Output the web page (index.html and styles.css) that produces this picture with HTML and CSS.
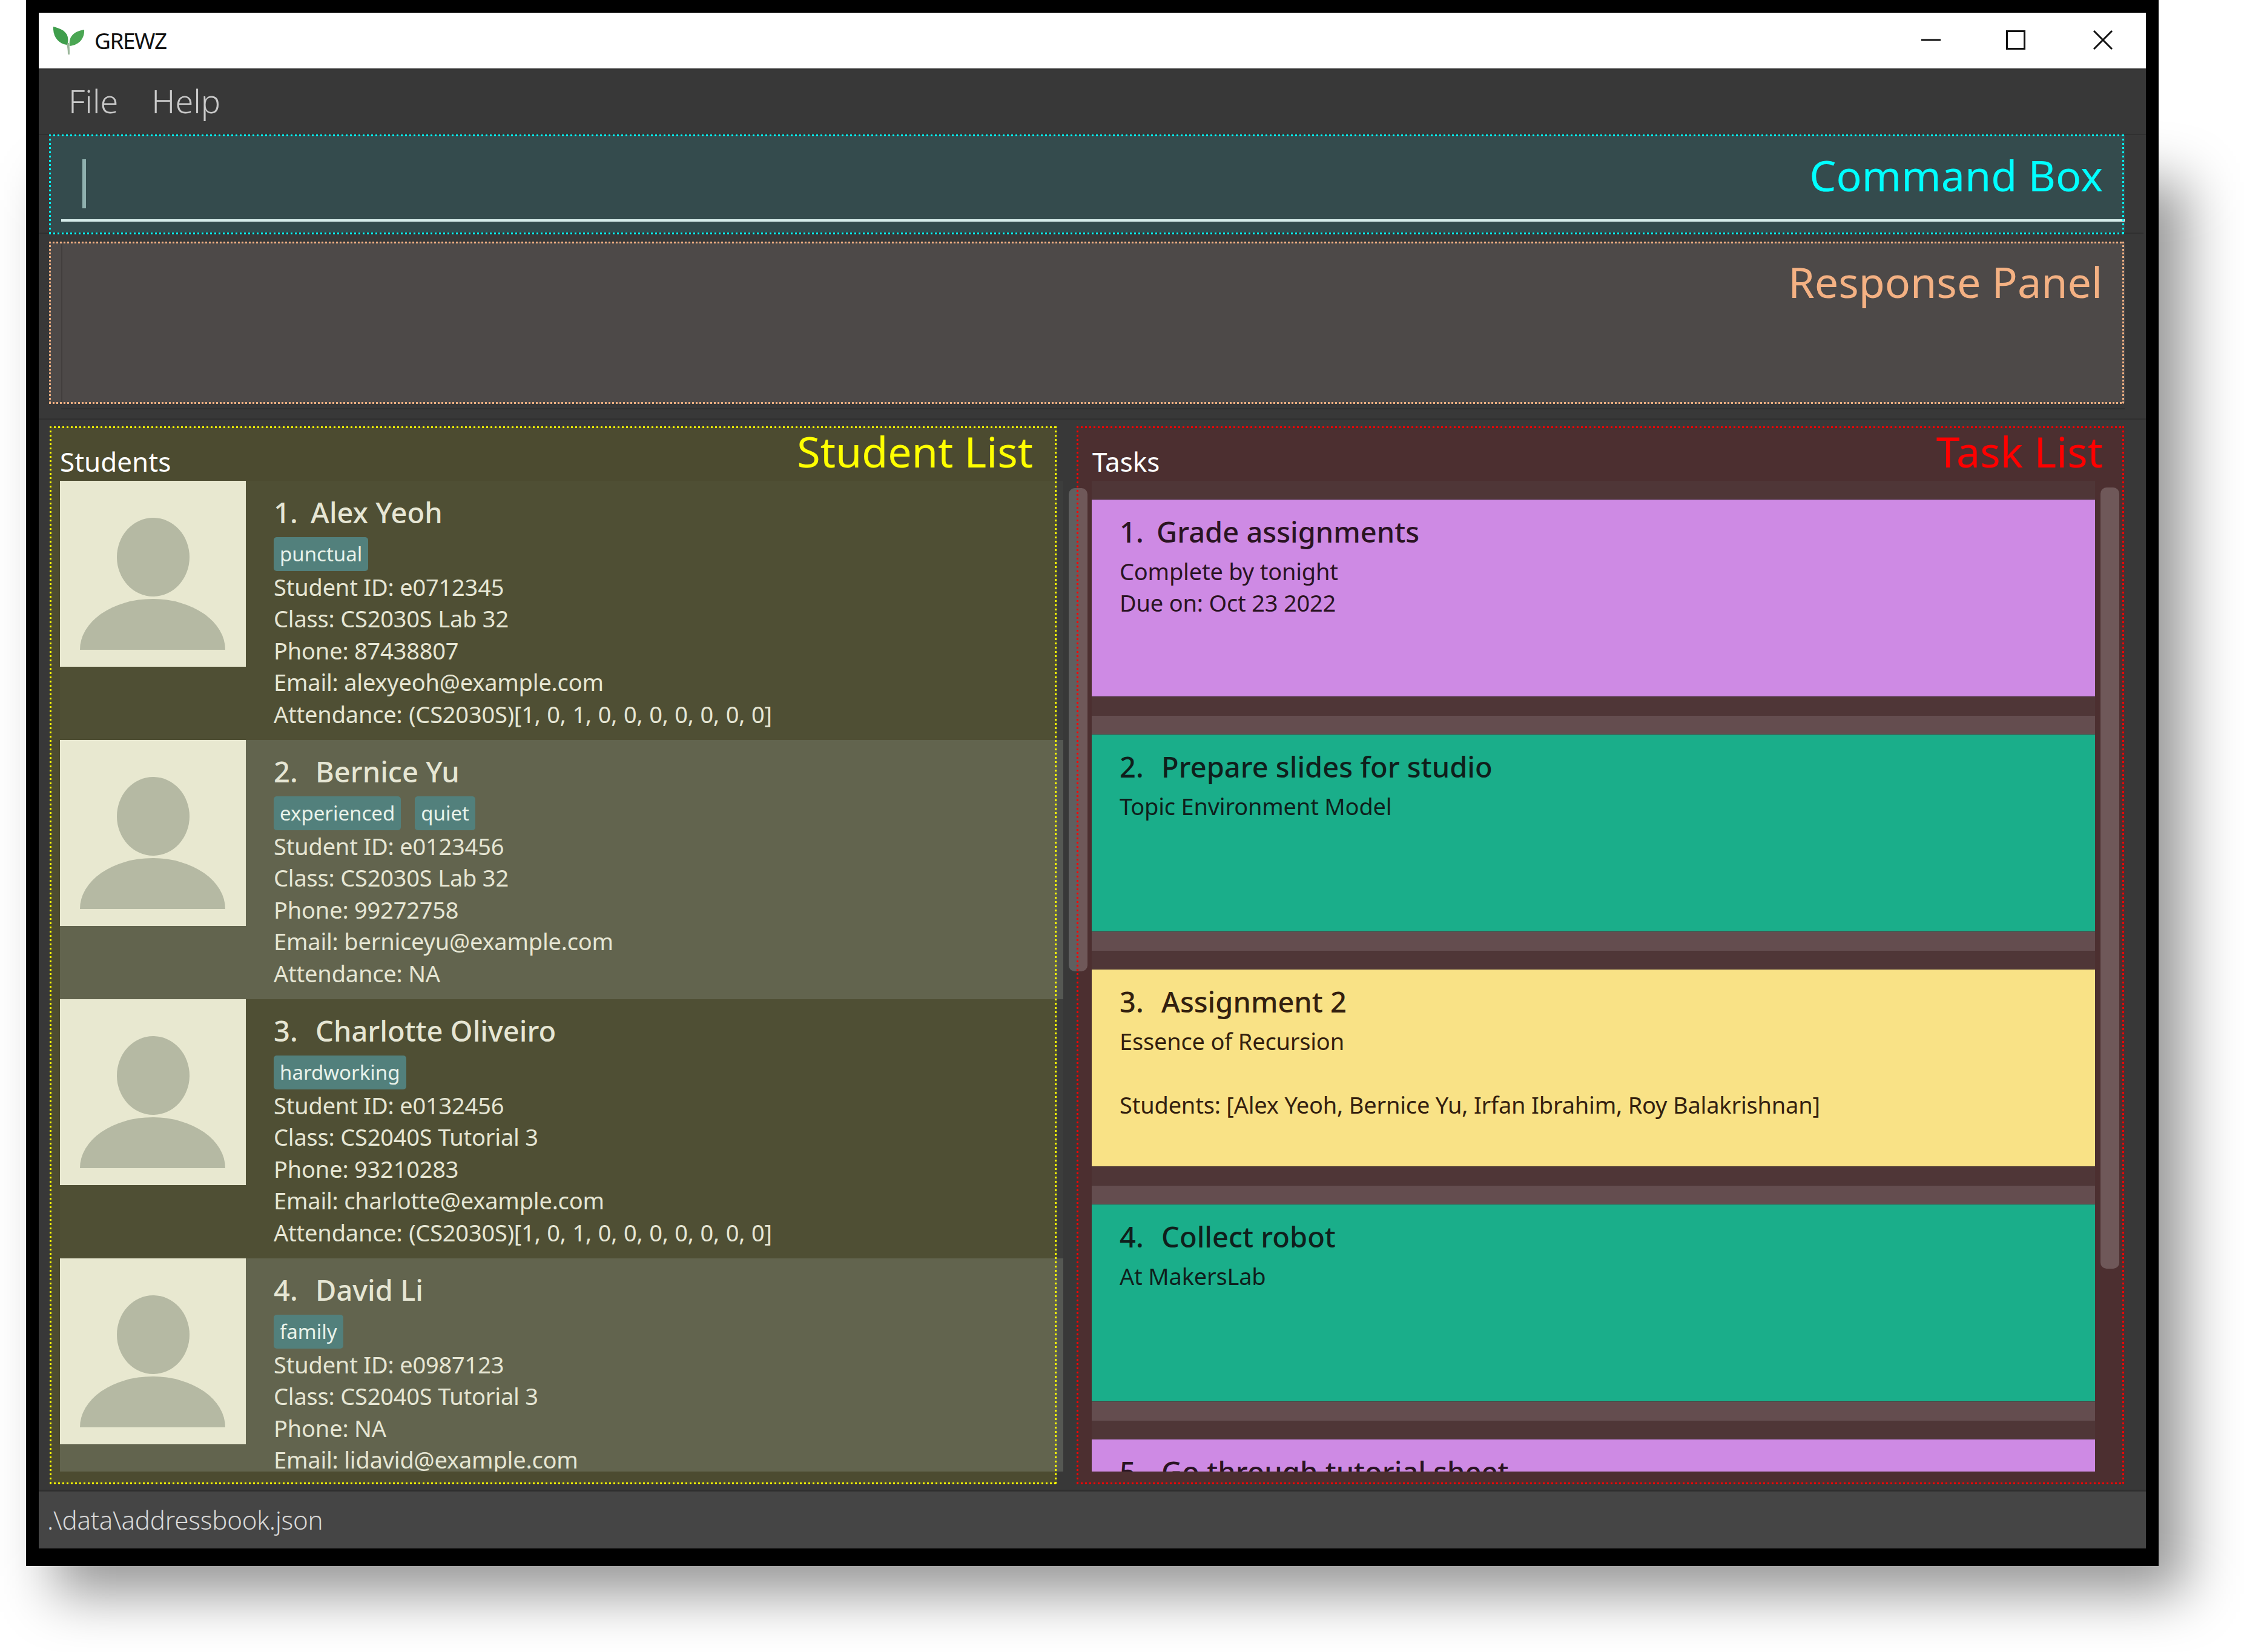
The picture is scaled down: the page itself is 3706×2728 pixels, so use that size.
FILE: index.html
```html
<!DOCTYPE html>
<html lang="en">
<head>
<meta charset="utf-8">
<title>GREWZ</title>
<link rel="stylesheet" href="styles.css">
</head>
<body>
<div class="stage">
  <div class="shadow"></div>
  <div class="frame">
    <div class="app">
      <header class="titlebar">
        <div class="brand">
          <svg class="logo" viewBox="0 0 52 46" aria-hidden="true">
            <path d="M21 26C23 32 24 38 24 46H27C27 38 27 32 26 27Z" fill="#9bb79b"/>
            <path d="M22 30C8 28 -1 16 0 0C8 2 22 6 24 18C25 24 24 28 22 30Z" fill="#3f9e4c"/>
            <path d="M27 32C25 18 32 8 51 5C52 18 44 30 27 32Z" fill="#4aa653"/>
          </svg>
          <span class="brand-name">GREWZ</span>
        </div>
        <div class="controls">
          <svg class="ctl" viewBox="0 0 32 32" aria-hidden="true"><path d="M0 16H32" /></svg>
          <svg class="ctl" viewBox="0 0 32 32" aria-hidden="true"><rect x="1.5" y="1.5" width="29" height="29"/></svg>
          <svg class="ctl ctl-close" viewBox="0 0 32 32" aria-hidden="true"><path d="M1 1L31 31M31 1L1 31"/></svg>
        </div>
      </header>
      <nav class="menubar"><span class="menu-item">File</span><span class="menu-item">Help</span></nav>
      <section class="cmd">
        <span class="caret"></span>
        <div class="underline"></div>
        <span class="note note-cyan">Command Box</span>
      </section>
      <section class="resp">
        <span class="note note-peach">Response Panel</span>
      </section>
      <div class="divider"></div>
      <main class="lists">
        <section class="panel panel-students">
          <h2 class="panel-title">Students</h2>
          <span class="note note-yellow">Student List</span>
          <div class="viewport">
            <article class="student">
              <svg class="avatar" viewBox="0 0 307 307" aria-hidden="true"><ellipse cx="154" cy="126" rx="60" ry="65"/><path d="M33 279A120 84 0 0 1 273 279Z"/></svg>
              <div class="info">
                <div class="name"><span class="num one">1.</span>&nbsp;&nbsp;Alex Yeoh</div>
                <div class="tags"><span class="tag">punctual</span></div>
                <div class="line">Student ID: e0712345</div>
                <div class="line">Class: CS2030S Lab 32</div>
                <div class="line">Phone: 87438807</div>
                <div class="line">Email: alexyeoh@example.com</div>
                <div class="line line-attendance">Attendance: (CS2030S)[1, 0, 1, 0, 0, 0, 0, 0, 0, 0]</div>
              </div>
            </article>
            <article class="student alt">
              <svg class="avatar" viewBox="0 0 307 307" aria-hidden="true"><ellipse cx="154" cy="126" rx="60" ry="65"/><path d="M33 279A120 84 0 0 1 273 279Z"/></svg>
              <div class="info">
                <div class="name"><span class="num">2.</span>&nbsp;&nbsp;Bernice Yu</div>
                <div class="tags"><span class="tag">experienced</span><span class="tag">quiet</span></div>
                <div class="line">Student ID: e0123456</div>
                <div class="line">Class: CS2030S Lab 32</div>
                <div class="line">Phone: 99272758</div>
                <div class="line">Email: berniceyu@example.com</div>
                <div class="line">Attendance: NA</div>
              </div>
            </article>
            <article class="student">
              <svg class="avatar" viewBox="0 0 307 307" aria-hidden="true"><ellipse cx="154" cy="126" rx="60" ry="65"/><path d="M33 279A120 84 0 0 1 273 279Z"/></svg>
              <div class="info">
                <div class="name"><span class="num">3.</span>&nbsp;&nbsp;Charlotte Oliveiro</div>
                <div class="tags"><span class="tag">hardworking</span></div>
                <div class="line">Student ID: e0132456</div>
                <div class="line">Class: CS2040S Tutorial 3</div>
                <div class="line">Phone: 93210283</div>
                <div class="line">Email: charlotte@example.com</div>
                <div class="line line-attendance">Attendance: (CS2030S)[1, 0, 1, 0, 0, 0, 0, 0, 0, 0]</div>
              </div>
            </article>
            <article class="student alt">
              <svg class="avatar" viewBox="0 0 307 307" aria-hidden="true"><ellipse cx="154" cy="126" rx="60" ry="65"/><path d="M33 279A120 84 0 0 1 273 279Z"/></svg>
              <div class="info">
                <div class="name"><span class="num">4.</span>&nbsp;&nbsp;David Li</div>
                <div class="tags"><span class="tag">family</span></div>
                <div class="line">Student ID: e0987123</div>
                <div class="line">Class: CS2040S Tutorial 3</div>
                <div class="line">Phone: NA</div>
                <div class="line">Email: lidavid@example.com</div>
              </div>
            </article>
          </div>
        </section>
        <div class="scrollbar scrollbar-students"></div>
        <section class="panel panel-tasks">
          <h2 class="panel-title">Tasks</h2>
          <span class="note note-red">Task List</span>
          <div class="viewport">
            <div class="task-row"><article class="card purple">
              <div class="name"><span class="num one">1.</span>&nbsp;&nbsp;Grade assignments</div>
              <div class="line">Complete by tonight</div>
              <div class="line">Due on: Oct 23 2022</div>
            </article></div>
            <div class="task-row alt"><article class="card teal">
              <div class="name"><span class="num">2.</span>&nbsp;&nbsp;Prepare slides for studio</div>
              <div class="line">Topic Environment Model</div>
            </article></div>
            <div class="task-row"><article class="card sand">
              <div class="name"><span class="num">3.</span>&nbsp;&nbsp;Assignment 2</div>
              <div class="line">Essence of Recursion</div>
              <div class="line">&nbsp;</div>
              <div class="line">Students: [Alex Yeoh, Bernice Yu, Irfan Ibrahim, Roy Balakrishnan]</div>
            </article></div>
            <div class="task-row alt"><article class="card teal">
              <div class="name"><span class="num">4.</span>&nbsp;&nbsp;Collect robot</div>
              <div class="line">At MakersLab</div>
            </article></div>
            <div class="task-row"><article class="card purple">
              <div class="name"><span class="num">5.</span>&nbsp;&nbsp;Go through tutorial sheet</div>
            </article></div>
          </div>
          <div class="scrollbar scrollbar-tasks"></div>
        </section>
      </main>
      <footer class="status">.\data\addressbook.json</footer>
    </div>
  </div>
</div>
</body>
</html>
```
FILE: styles.css
```css
* { box-sizing: border-box; }
html, body { margin: 0; background: #fff; }
body { font-family: "Noto Sans", "Open Sans", sans-serif; }

.stage { position: relative; width: 3706px; height: 2728px; overflow: hidden; }
.shadow {
  position: absolute; left: 90px; top: 300px; width: 3520px; height: 2332px;
  background: rgba(0, 0, 0, .41); filter: blur(45px);
}
.frame {
  position: relative; margin-left: 43px; width: 3522px; height: 2586px;
  padding: 21px 21px 29px; background: #000;
}
.app { display: flex; flex-direction: column; height: 2536px; background: #383838; }

.titlebar {
  flex: none; height: 93px; background: #fff; border-bottom: 2px solid #777;
  display: flex; align-items: center; justify-content: space-between;
  padding-left: 24px; padding-right: 55px;
}
.brand { display: flex; align-items: center; gap: 16px; }
.logo { width: 52px; height: 46px; }
.brand-name { font-size: 37px; color: #111; letter-spacing: -1.5px; }
.controls { display: flex; gap: 108px; margin-top: -1px; }
.ctl { width: 32px; height: 32px; fill: none; stroke: #111; stroke-width: 3; }
.ctl-close { margin-left: 4px; }

.menubar {
  flex: none; height: 109px; padding-left: 49px; padding-bottom: 4px; display: flex; gap: 55px;
  align-items: center; font-size: 54px; font-weight: 300; color: #c9c9c9;
  border-bottom: 2px solid #303030;
}

/* square dotted outline drawn over the region, including anything that overflows it */
.cmd, .resp, .panel { --dot: #fff; --p: 7px; --t: 3px; }
.cmd::after, .resp::after, .panel::after {
  content: ""; position: absolute; inset: -4px -2px -4px -4px; z-index: 3; pointer-events: none;
  background:
    linear-gradient(to right, var(--dot) 50%, transparent 0) 0 0 / var(--p) var(--t) repeat-x,
    linear-gradient(to right, var(--dot) 50%, transparent 0) 0 100% / var(--p) var(--t) repeat-x,
    linear-gradient(to bottom, var(--dot) 50%, transparent 0) 0 0 / var(--t) var(--p) repeat-y,
    linear-gradient(to bottom, var(--dot) 50%, transparent 0) 100% 0 / var(--t) var(--p) repeat-y;
}

.cmd, .resp { position: relative; flex: none; margin-left: 18px; width: 3427px; }
.cmd { --dot: #00ffff; height: 163px; background: #344b4d; border: 3px solid transparent; }
.cmd::before {
  content: ""; position: absolute; left: -21px; right: -34px; bottom: -3px; height: 2px; background: #303030;
}
.caret {
  position: absolute; left: 51px; top: 37px; width: 6px; height: 81px; background: #8fb0ae;
}
.underline {
  position: absolute; left: 16px; right: -3px; bottom: 17px; height: 4px; background: #d6ecea;
}
.resp { --dot: #f4b183; --p: 6px; height: 266px; margin-top: 14px; background: #4d4948; border: 3px solid transparent; }
.resp::before {
  content: ""; position: absolute; left: 16px; top: 0; bottom: -3px; width: 2px; background: #423e3d;
}
.divider { flex: none; height: 39px; padding-top: 8px; }
.divider::before {
  content: ""; display: block; height: 2px; margin: 0 35px 0 37px; background: #303030;
}
.divider::after {
  content: ""; display: block; height: 2px; margin-top: 15px; background: #303030;
}

.note { position: absolute; font-size: 70px; line-height: 96px; white-space: nowrap; }
.note-cyan { right: 33px; top: 15px; color: #00ffff; }
.note-peach { right: 34px; top: 14px; color: #f4b183; }
.note-yellow { right: 37px; top: -11px; color: #ffff00; }
.note-red { right: 33px; top: -11px; color: #ff0000; }

.lists {
  position: relative; flex: none; height: 1745px; margin-left: 19px;
  display: flex; gap: 33px;
}
.panel { position: relative; height: 1745px; border: 3px solid transparent; }
.panel-students { --dot: #ffff00; width: 1663px; background: #4c4b30; padding-left: 13px; }
.panel-tasks { --dot: #ff0000; width: 1730px; background: #4c2f30; padding-left: 21px; padding-right: 46px; }
.panel-title {
  margin: 0; height: 86px; padding-top: 22px; font-size: 44px; line-height: 64px;
  font-weight: 400; color: #fff;
}
.panel-tasks .panel-title { padding-left: 1px; }
.viewport { height: 1636px; overflow: hidden; }
.panel-students .viewport { margin-right: -13px; }
.panel-tasks .viewport { background: #4f3637; }

.student { display: flex; height: 428px; background: rgba(139, 149, 134, .05); color: #e6e6d4; }
.student.alt { background: rgba(139, 149, 134, .35); }
.avatar { flex: none; width: 307px; height: 307px; background: #e8e8d0; fill: #b5b9a3; }
.info { padding: 20px 0 0 46px; }
.name { font-size: 47px; line-height: 64px; font-weight: 500; }
.num { margin-right: 5px; }
.num.one { margin-right: -3px; }
.line { font-size: 38px; line-height: 52.4px; white-space: nowrap; letter-spacing: -.2px; }
.line-attendance { word-spacing: 1px; }
.tags { display: flex; gap: 23px; margin-top: 9px; }
.tag {
  height: 56px; padding: 0 10px; border-radius: 5px; background: #52807c; color: #e9f2ea;
  font-size: 33px; line-height: 56px;
}

.task-row { height: 388px; padding-top: 31px; }
.task-row.alt { background: #644d4f; }
.card { height: 325px; padding: 21px 0 0 46px; color: #2a1422; box-shadow: 0 0 0 1px rgba(0, 0, 0, .18); }
.card .name + .line { margin-top: 7px; }
.purple { background: #ce8ae4; }
.teal { background: #1aae8a; color: #0f1f1c; }
.sand { background: #f9e286; color: #33200f; }

.scrollbar { position: absolute; width: 31px; background: rgba(255, 255, 255, .2); border-radius: 10px; }
.scrollbar-students { left: 1682px; top: 101px; height: 798px; z-index: 2; }
.scrollbar-tasks { right: 6px; top: 97px; height: 1290px; }

.status {
  flex: none; height: 97px; margin-top: 10px; padding-left: 14px; background: #454545;
  border-top: 3px solid #2f2f2f; font-size: 42px; line-height: 94px; font-weight: 300;
  color: #d8d8d8; letter-spacing: -.2px;
}
```
